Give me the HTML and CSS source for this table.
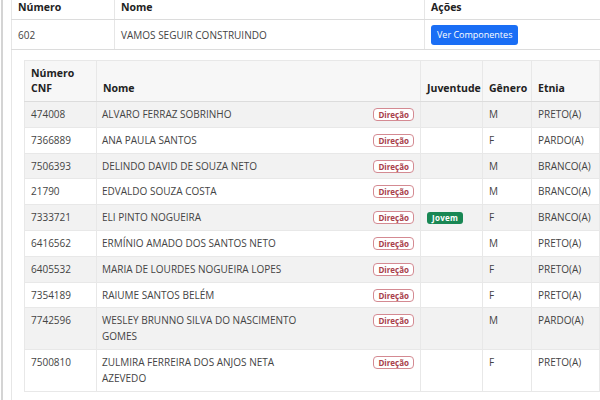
FILE: index.html
```html
<!DOCTYPE html>
<html lang="pt">
<head>
<meta charset="utf-8">
<link rel="stylesheet" href="styles.css">
</head>
<body>
<div class="page">
  <table class="outer">
    <colgroup><col class="oc1"><col class="oc2"><col class="oc3"></colgroup>
    <thead>
      <tr><th>Número</th><th>Nome</th><th>Ações</th></tr>
    </thead>
    <tbody>
      <tr class="main-row">
        <td>602</td>
        <td>VAMOS SEGUIR CONSTRUINDO</td>
        <td><button class="btn">Ver Componentes</button></td>
      </tr>
      <tr class="detail-row">
        <td colspan="3">
          <table class="inner">
            <colgroup><col class="ic1"><col class="ic2"><col class="ic3"><col class="ic4"><col class="ic5"></colgroup>
            <thead>
              <tr><th>Número<br>CNF</th><th>Nome</th><th>Juventude</th><th>Gênero</th><th>Etnia</th></tr>
            </thead>
            <tbody>
              <tr><td>474008</td><td><div class="namecell"><span class="name">ALVARO FERRAZ SOBRINHO</span><span class="tag-dir">Direção</span></div></td><td></td><td>M</td><td>PRETO(A)</td></tr>
              <tr><td>7366889</td><td><div class="namecell"><span class="name">ANA PAULA SANTOS</span><span class="tag-dir">Direção</span></div></td><td></td><td>F</td><td>PARDO(A)</td></tr>
              <tr><td>7506393</td><td><div class="namecell"><span class="name">DELINDO DAVID DE SOUZA NETO</span><span class="tag-dir">Direção</span></div></td><td></td><td>M</td><td>BRANCO(A)</td></tr>
              <tr><td>21790</td><td><div class="namecell"><span class="name">EDVALDO SOUZA COSTA</span><span class="tag-dir">Direção</span></div></td><td></td><td>M</td><td>BRANCO(A)</td></tr>
              <tr><td>7333721</td><td><div class="namecell"><span class="name">ELI PINTO NOGUEIRA</span><span class="tag-dir">Direção</span></div></td><td><span class="tag-jovem">Jovem</span></td><td>F</td><td>BRANCO(A)</td></tr>
              <tr><td>6416562</td><td><div class="namecell"><span class="name">ERMÍNIO AMADO DOS SANTOS NETO</span><span class="tag-dir">Direção</span></div></td><td></td><td>M</td><td>PRETO(A)</td></tr>
              <tr><td>6405532</td><td><div class="namecell"><span class="name">MARIA DE LOURDES NOGUEIRA LOPES</span><span class="tag-dir">Direção</span></div></td><td></td><td>F</td><td>PRETO(A)</td></tr>
              <tr><td>7354189</td><td><div class="namecell"><span class="name">RAIUME SANTOS BELÉM</span><span class="tag-dir">Direção</span></div></td><td></td><td>F</td><td>PRETO(A)</td></tr>
              <tr><td>7742596</td><td><div class="namecell"><span class="name">WESLEY BRUNNO SILVA DO NASCIMENTO GOMES</span><span class="tag-dir">Direção</span></div></td><td></td><td>M</td><td>PARDO(A)</td></tr>
              <tr><td>7500810</td><td><div class="namecell"><span class="name">ZULMIRA FERREIRA DOS ANJOS NETA AZEVEDO</span><span class="tag-dir">Direção</span></div></td><td></td><td>F</td><td>PRETO(A)</td></tr>
            </tbody>
          </table>
        </td>
      </tr>
    </tbody>
  </table>
</div>
</body>
</html>
```

FILE: styles.css
```css
html, body {
  margin: 0;
  padding: 0;
  background: #fff;
  overflow: hidden;
}
body {
  font-family: "Open Sans", "Liberation Sans", sans-serif;
  font-size: 10px;
  color: #4a4a4a;
}
.page {
  margin-left: 1px;
  margin-top: -8px;
  border-left: 2px solid #d4d4d4;
  padding-left: 8px;
  height: 420px;
}
table {
  border-collapse: collapse;
}
.outer {
  width: 620px;
  table-layout: fixed;
}
.oc1 { width: 103px; }
.oc2 { width: 310px; }
.oc3 { width: 207px; }
.outer > thead > tr > th {
  text-align: left;
  font-weight: 700;
  font-size: 10.5px;
  color: #222;
  padding: 6px 6px 4px;
  height: 17px;
  border-bottom: 1px solid #dcdcdc;
  border-left: 1px solid #e6e6e6;
}
.outer > tbody > .main-row > td {
  padding: 4px 6px 4px;
  height: 21px;
  border-bottom: 1px solid #dcdcdc;
  border-left: 1px solid #e6e6e6;
  color: #444;
}
.btn {
  display: block;
  font-family: "Open Sans", "Liberation Sans", sans-serif;
  font-size: 9px;
  color: #fff;
  background: #1a6ef5;
  border: none;
  border-radius: 3px;
  padding: 0 6px;
  height: 20px;
  line-height: 20px;
}
.detail-row > td {
  border-left: 1px solid #e6e6e6;
  padding: 10px 0 0 12px;
  vertical-align: top;
  height: 400px;
}
.inner {
  width: 575px;
  table-layout: fixed;
  border: 1px solid #e2e2e2;
}
.ic1 { width: 72px; }
.ic2 { width: 324px; }
.ic3 { width: 62px; }
.ic4 { width: 49px; }
.ic5 { width: 68px; }
.inner th {
  background: #f7f7f7;
  text-align: left;
  vertical-align: bottom;
  font-weight: 700;
  font-size: 10.5px;
  color: #222;
  line-height: 15px;
  padding: 5px 6px 5px;
  border: 1px solid #e8e8e8;
  border-bottom: 1px solid #dcdcdc;
}
.inner td {
  vertical-align: top;
  line-height: 15.8px;
  padding: 5px 6px 4px;
  border: 1px solid #e8e8e8;
  color: #444;
}
.inner td:nth-child(2) {
  padding-left: 5px;
}
.inner tbody tr:nth-child(odd) td {
  background: #f2f2f2;
}
.namecell {
  display: flex;
  justify-content: space-between;
  align-items: flex-start;
}
.name {
  max-width: 205px;
}
.tag-dir {
  font-size: 8px;
  font-weight: 700;
  color: #a8404a;
  border: 1px solid #d48a92;
  border-radius: 4px;
  padding: 0 4px;
  line-height: 11px;
  margin-top: 1px;
  background: #fff;
}
.tag-jovem {
  display: inline-block;
  font-size: 8px;
  font-weight: 700;
  color: #fff;
  background: #198754;
  border-radius: 3px;
  padding: 0 5px;
  line-height: 12px;
  margin-top: 2px;
  letter-spacing: 0.3px;
}
```
